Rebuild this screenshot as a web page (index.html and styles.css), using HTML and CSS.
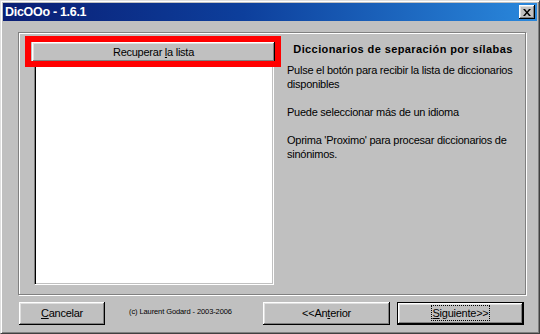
FILE: index.html
```html
<html>
<head>
<title>DicOOo - 1.6.1</title>
  <link rel="stylesheet" href="styles.css">
</head>

<body>
<div class="window">
  <!-- title bar -->
  <div class="titlebar">
    <span class="title">DicOOo - 1.6.1</span>
    <span class="close">
      <svg width="8" height="7" viewBox="0 0 8 7"><path d="M0 0h2l2 2.5L6 0h2L5 3.5 8 7H6L4 4.5 2 7H0l3-3.5z" fill="#000"/></svg>
    </span>
  </div>

  <div class="content">
    <div class="group">
      <div class="leftcol">
        <div class="btn fetch"><span>Recuperar <u>l</u>a lista</span></div>
        <div class="listbox"></div>
        <div class="highlight"></div>
      </div>
      <div class="info">
        <div class="heading">Diccionarios de separación por sílabas</div>
        <p>Pulse el botón para recibir la lista de diccionarios disponibles</p>
        <p>Puede seleccionar más de un idioma</p>
        <p>Oprima 'Proximo' para procesar diccionarios de sinónimos.</p>
      </div>
    </div>

    <div class="footer">
      <div class="btn cancel"><span><u>C</u>ancelar</span></div>
      <span class="copy">(c) Laurent Godard - 2003-2006</span>
      <div class="btn prev"><span>&lt;&lt;An<u>t</u>erior</span></div>
      <div class="btn next"><span class="focus"><u>S</u>iguiente&gt;&gt;</span></div>
    </div>
  </div>
</div>
</body>
</html>
```

FILE: styles.css
```css
body{
  margin: 0;
  background: #c0c0c0;
  font-family: "Liberation Sans", Arial, sans-serif;
  font-size: 11px;
  color: #000;
}

.window{
  width: 540px;
  height: 334px;
  box-sizing: border-box;
  border: 1px solid;
  border-color: #dfdfdf #404040 #404040 #dfdfdf;
  box-shadow: inset 1px 1px #fff, inset -1px -1px #808080;
  padding: 2px;
  background: #c0c0c0;
}

.titlebar{
  height: 18px;
  display: flex;
  align-items: flex-start;
  justify-content: space-between;
  background: linear-gradient(to right, #0a1e74, #0d3f9c 45%, #2a88dc);
}

.title{
  color: #fff;
  font-weight: bold;
  font-size: 12.5px;
  letter-spacing: -0.3px;
  line-height: 19px;
  padding-left: 2px;
}

.close{
  width: 16px;
  height: 14px;
  margin: 2px 2px 0 0;
  box-sizing: border-box;
  background: #c0c0c0;
  box-shadow: inset -1px -1px #000, inset 1px 1px #fff, inset -2px -2px #808080, inset 2px 2px #dfdfdf;
  display: flex;
  align-items: center;
  justify-content: center;
}

.close svg{
  margin-left: -1px;
}

.group{
  margin: 11px 0 0 15px;
  width: 508px;
  height: 263px;
  box-sizing: border-box;
  border: 1px solid #808080;
  box-shadow: inset 1px 1px #fff, 1px 1px #fff;
  padding: 9px 0 0 13px;
  display: flex;
  gap: 12px;
}

.leftcol{
  position: relative;
  width: 243px;
}

.btn{
  box-sizing: border-box;
  background: #c0c0c0;
  box-shadow: inset -1px -1px #000, inset 1px 1px #fff, inset -2px -2px #808080, inset 2px 2px #dfdfdf;
  text-align: center;
  letter-spacing: -0.25px;
  display: flex;
  align-items: center;
  justify-content: center;
}

.btn u{
  text-underline-offset: 1px;
}

.fetch{
  height: 20px;
  padding-bottom: 1px;
}

.listbox{
  margin-left: 2px;
  width: 240px;
  height: 223px;
  box-sizing: border-box;
  background: #fff;
  border: 1px solid;
  border-color: #808080 #fff #fff #808080;
  box-shadow: inset 1px 1px #000, inset -1px -1px #c0c0c0;
}

/* red annotation box drawn over the button */
.highlight{
  position: absolute;
  left: -7px;
  top: -6px;
  width: 256px;
  height: 31px;
  box-sizing: border-box;
  border: 6px solid #f00;
}

.info{
  width: 232px;
  line-height: 14px;
  letter-spacing: -0.25px;
}

.heading{
  font-weight: bold;
  text-align: center;
  letter-spacing: 0.4px;
  margin-bottom: 7px;
}

.info p{
  margin: 0 0 14px;
}

.footer{
  display: flex;
  margin-top: 7px;
  padding: 0 13px 0 16px;
}

.footer .btn{
  height: 23px;
  padding-bottom: 1px;
}

.cancel{
  width: 86px;
}

.copy{
  font-size: 7.5px;
  letter-spacing: -0.1px;
  margin: 4px 0 0 24px;
  line-height: 12px;
}

.prev{
  width: 127px;
  margin-left: auto;
}

.next{
  width: 127px;
  margin-left: 7px;
  border: 1px solid #000;
}

.focus{
  border: 1px dotted #000;
  padding: 0 1px;
  line-height: 14px;
}
```
